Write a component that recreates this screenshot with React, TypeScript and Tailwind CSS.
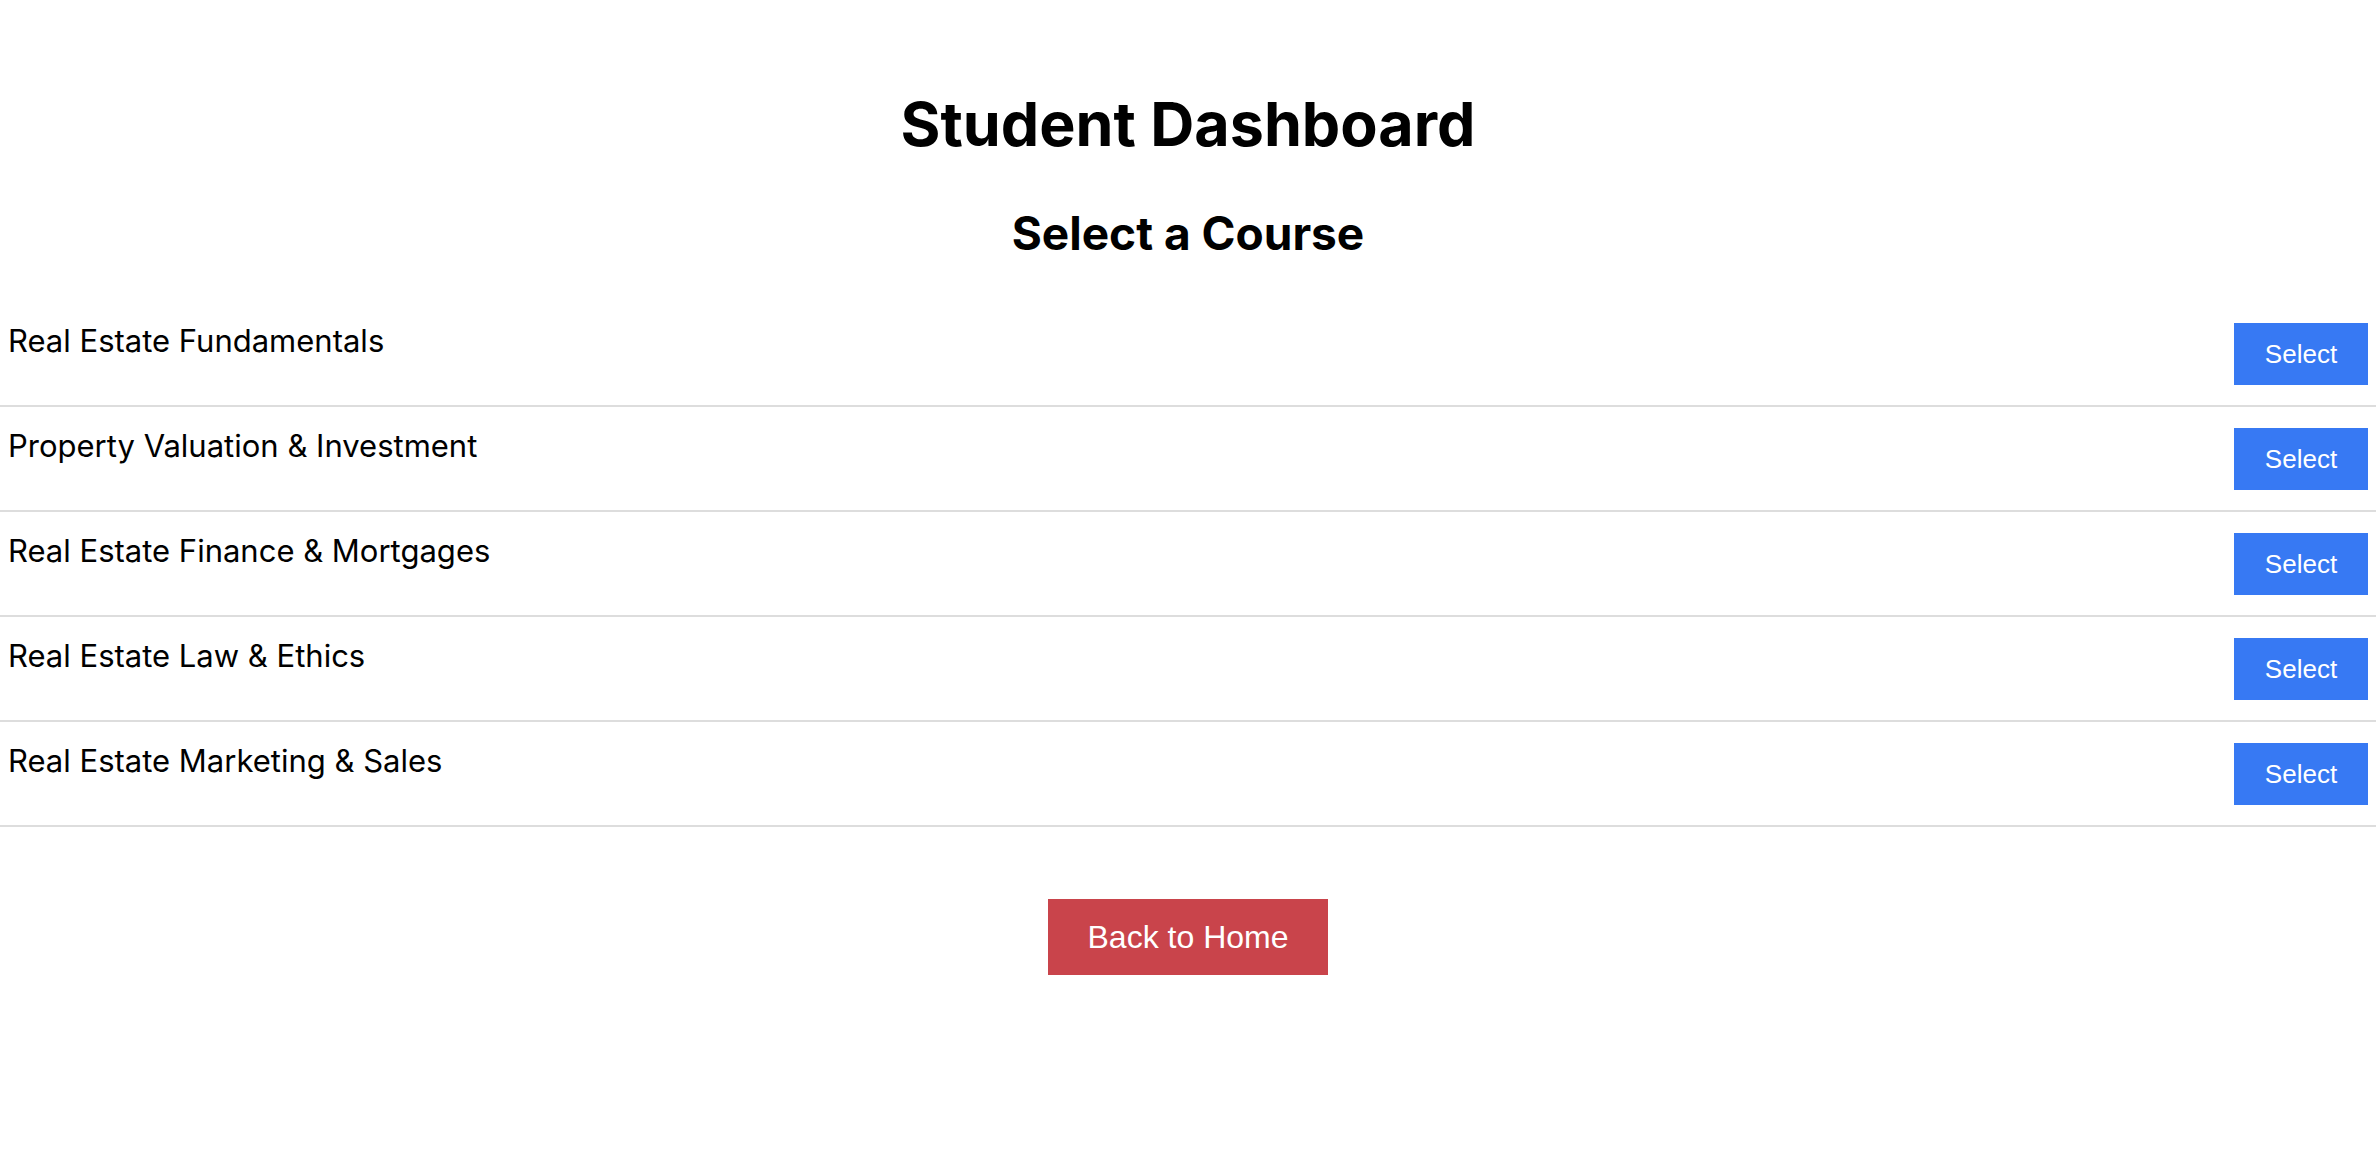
import React from "react";

const courses = [
  "Real Estate Fundamentals",
  "Property Valuation & Investment",
  "Real Estate Finance & Mortgages",
  "Real Estate Law & Ethics",
  "Real Estate Marketing & Sales",
];

export default function App() {
  return (
    <div className="min-h-screen bg-white pt-[88px] text-black [font-family:Inter,'Noto_Sans',sans-serif]">
      <h1 className="text-center text-[61px] font-bold leading-[1.21]">Student Dashboard</h1>
      <h2 className="mt-[44px] text-center text-[46px] font-bold leading-[1.21]">Select a Course</h2>
      <ul className="mt-[41px]">
        {courses.map((c) => (
          <li
            key={c}
            className="flex items-start justify-between border-b-2 border-[#dddddd] px-2 pt-[21px] pb-[20px]"
          >
            <span className="-mt-[1px] text-[31px] leading-[1.21]">{c}</span>
            <button className="h-[62px] w-[134px] bg-[#3779f3] text-[26px] text-white [font-family:'Liberation_Sans',Arial,sans-serif]">
              Select
            </button>
          </li>
        ))}
      </ul>
      <div className="mt-[72px] flex justify-center">
        <button className="h-[76px] w-[280px] bg-[#c9444b] text-[32px] text-white [font-family:'Liberation_Sans',Arial,sans-serif]">
          Back to Home
        </button>
      </div>
    </div>
  );
}
